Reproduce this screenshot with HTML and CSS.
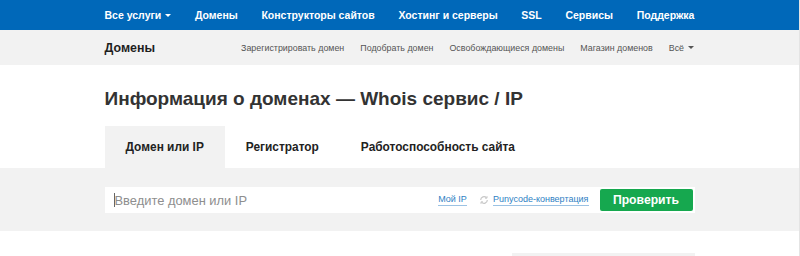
FILE: index.html
```html
<!DOCTYPE html>
<html lang="ru">
<head>
<meta charset="utf-8">
<link rel="stylesheet" href="styles.css">
</head>
<body>
<header class="topbar">
  <nav class="wrap topnav">
    <a class="tn">Все услуги <span class="caret"></span></a>
    <a class="tn">Домены</a>
    <a class="tn">Конструкторы сайтов</a>
    <a class="tn">Хостинг и серверы</a>
    <a class="tn">SSL</a>
    <a class="tn">Сервисы</a>
    <a class="tn">Поддержка</a>
  </nav>
</header>
<div class="subbar">
  <div class="wrap subnav">
    <div class="subtitle">Домены</div>
    <div class="sublinks">
      <a>Зарегистрировать домен</a>
      <a>Подобрать домен</a>
      <a>Освобождающиеся домены</a>
      <a>Магазин доменов</a>
      <a>Всё <span class="caret dark"></span></a>
    </div>
  </div>
</div>
<main>
  <div class="wrap">
    <h1 class="title">Информация о доменах — Whois сервис / IP</h1>
    <div class="tabs">
      <div class="tab active">Домен или IP</div>
      <div class="tab">Регистратор</div>
      <div class="tab">Работоспособность сайта</div>
    </div>
  </div>
  <div class="band">
    <div class="wrap">
      <form class="search">
        <div class="field">
          <span class="cursor"></span><span class="ph">Введите домен или IP</span>
          <div class="extra">
            <a class="lnk">Мой IP</a>
            <svg class="ico" width="10" height="10" viewBox="0 0 12 12"><path d="M10 6a4 4 0 0 1-7 2.6M2 6a4 4 0 0 1 7-2.6" fill="none" stroke="#c8c8c8" stroke-width="1.4"/><path d="M9.6 1.4v2.4H7.2M2.4 10.6V8.2h2.4" fill="none" stroke="#c8c8c8" stroke-width="1.2"/></svg>
            <a class="lnk">Punycode-конвертация</a>
          </div>
        </div>
        <button type="button" class="btn">Проверить</button>
      </form>
    </div>
  </div>
  <div class="wrap lower">
    <div class="side"></div>
  </div>
</main>
</body>
</html>
```
FILE: styles.css
```css
* { box-sizing: border-box; }
html, body { margin: 0; padding: 0; }
body {
  font-family: "Liberation Sans", Arial, sans-serif;
  color: #333;
  background: #fff;
  overflow: hidden;
  height: 256px;
  border-right: 1px solid #e4e4e4;
}
.wrap { width: 590px; margin: 0 auto; }
.topbar { background: #0068b9; height: 30px; }
.topnav { display: flex; align-items: center; justify-content: space-between; height: 30px; }
.tn { color: #fff; font-weight: bold; font-size: 10.5px; white-space: nowrap; }
.caret {
  display: inline-block; width: 0; height: 0;
  border-left: 3px solid transparent; border-right: 3px solid transparent;
  border-top: 3px solid #fff; vertical-align: 2px; margin-left: 1px;
}
.caret.dark { border-top-color: #555; }
.subbar { background: #f2f2f2; height: 35px; }
.subnav { display: flex; align-items: center; justify-content: space-between; height: 35px; }
.subtitle { font-weight: bold; font-size: 12.4px; color: #1e1e1e; }
.sublinks { display: flex; gap: 16px; font-size: 8.9px; color: #555; white-space: nowrap; padding-right: 1px; }
.title { font-size: 19px; font-weight: bold; margin: 22px 0 0; line-height: 24px; color: #333; }
.tabs { display: flex; margin-top: 15px; height: 42px; }
.tab { font-size: 11.9px; font-weight: bold; color: #222; padding: 0 21px; display: flex; align-items: center; }
.tab.active { background: #f2f2f2; }
.band { background: #f2f2f2; height: 63px; padding-top: 19px; }
.search { display: flex; align-items: center; background: #fff; height: 26px; padding-right: 2px; }
.field { flex: 1; display: flex; align-items: center; height: 26px; padding-left: 9px; }
.cursor { width: 1px; height: 14px; background: #666; }
.ph { color: #8e8e8e; font-size: 12.9px; flex: 1; }
.extra { display: flex; align-items: center; font-size: 9px; margin-right: 11px; }
.lnk { color: #2f7fc4; border-bottom: 1px solid #9cc2e3; line-height: 11px; }
.ico { margin: 0 4px 0 12px; }
.btn {
  background: #16a84f; color: #fff; border: 0; border-radius: 2px;
  font-family: inherit; font-weight: bold; font-size: 12.2px;
  width: 93px; height: 22px; padding: 0;
}
.lower { display: flex; justify-content: flex-end; padding-top: 22px; }
.side { width: 183px; height: 3px; background: #f2f2f2; }
```
